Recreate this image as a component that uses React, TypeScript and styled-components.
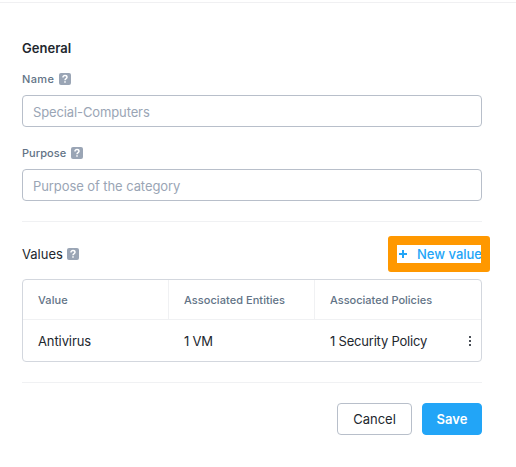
import React from "react";
import styled, { createGlobalStyle } from "styled-components";

const GlobalStyle = createGlobalStyle`
  * { box-sizing: border-box; }
  body { margin: 0; background: #fff; font-family: Inter, "Open Sans", sans-serif; }
`;

const Page = styled.main`
  height: 467px;
  padding-top: 2px;
  overflow: hidden;
`;
const Panel = styled.form`
  border-top: 1px solid #f0f0f2;
  padding: 35px 34px 0 22px;
  display: flex;
  flex-direction: column;
`;
const Text = styled.span<{ $size?: number; $weight?: number; $color?: string; $track?: number }>`
  font-size: ${(p) => p.$size ?? 13}px;
  font-weight: ${(p) => p.$weight ?? 400};
  color: ${(p) => p.$color ?? "#22272e"};
  letter-spacing: ${(p) => p.$track ?? 0}px;
  white-space: nowrap;
`;
const Heading = styled.h2`
  margin: 0;
  height: 20px;
  line-height: 20px;
  font-size: 13px;
  font-weight: 600;
  color: #22272e;
  letter-spacing: 0.05px;
`;
const Field = styled.div<{ $gap: number }>`
  margin-top: ${(p) => p.$gap}px;
  display: flex;
  flex-direction: column;
  gap: 8px;
`;
const LabelRow = styled.div<{ $gap: number }>`
  display: flex;
  align-items: center;
  gap: ${(p) => p.$gap}px;
  height: 16px;
`;
const Input = styled.input<{ $track: number }>`
  width: 460px;
  height: 32px;
  border: 1px solid #b8bfca;
  border-radius: 4px;
  padding: 2px 10px 0;
  font: 400 13px Inter, "Open Sans", sans-serif;
  letter-spacing: ${(p) => p.$track}px;
  outline: none;
  &::placeholder { color: #9aa5b5; opacity: 1; }
`;
const Divider = styled.hr<{ $gap: number }>`
  width: 460px;
  height: 1px;
  border: 0;
  margin: ${(p) => p.$gap}px 0 0;
  background: #f0f1f3;
`;
const ValuesBar = styled.div`
  margin: 14px -8px 0 0;
  width: 468px;
  height: 36px;
  display: flex;
  align-items: center;
  justify-content: space-between;
`;
const NewValue = styled.button`
  width: 102px;
  height: 36px;
  border: 9px solid #ff9800;
  border-radius: 3px;
  background: #fff;
  padding: 0 0 0 2px;
  display: flex;
  align-items: center;
  gap: 10px;
  overflow: hidden;
  font-family: inherit;
  svg { flex: none; }
`;
const Table = styled.div`
  margin-top: 7px;
  width: 460px;
  height: 83px;
  border: 1px solid #d3d7de;
  border-radius: 4px;
`;
const Row = styled.div<{ $head?: boolean }>`
  display: grid;
  grid-template-columns: 146px 146px 1fr;
  height: ${(p) => (p.$head ? 40 : 41)}px;
  border-bottom: ${(p) => (p.$head ? "1px solid #f0f1f3" : "0")};
`;
const Cell = styled.div<{ $line?: boolean }>`
  display: flex;
  align-items: center;
  justify-content: space-between;
  padding: 1px 9px 0 15px;
  border-right: 1px solid ${(p) => (p.$line ? "#f0f1f3" : "transparent")};
  &:last-child { border-right: 0; }
`;
const Actions = styled.div`
  width: 460px;
  margin-top: 20px;
  display: flex;
  justify-content: flex-end;
  gap: 10px;
`;
const Button = styled.button<{ $primary?: boolean }>`
  width: ${(p) => (p.$primary ? 60 : 75)}px;
  height: 32px;
  padding: 0;
  border-radius: 4px;
  border: 1px solid ${(p) => (p.$primary ? "#22a5f7" : "#b8bfca")};
  background: ${(p) => (p.$primary ? "#22a5f7" : "#fff")};
  font-family: inherit;
`;

const Help = () => (
  <svg width="12" height="12" viewBox="0 0 12 12">
    <rect width="12" height="12" rx="2" fill="#9aa5b5" />
    <path d="M4 4.5C4 3.2 4.8 2.6 6 2.6s2 .7 2 1.7C8 5.6 6 5.5 6 7.2" fill="none" stroke="#fff" strokeWidth="1.5" />
    <rect x="5.25" y="8.2" width="1.5" height="1.5" fill="#fff" />
  </svg>
);
const Plus = () => (
  <svg width="8" height="8" viewBox="0 0 8 8">
    <path d="M4 0v8M0 4h8" stroke="#22a5f7" strokeWidth="2" />
  </svg>
);
const Dots = () => (
  <svg width="4" height="12" viewBox="0 0 4 12" fill="#4a4f57">
    <rect x="1" y="1" width="2" height="2" />
    <rect x="1" y="5" width="2" height="2" />
    <rect x="1" y="9" width="2" height="2" />
  </svg>
);

const LABEL = "#627386";

export default function App() {
  return (
    <>
      <GlobalStyle />
      <Page>
        <Panel onSubmit={(e) => e.preventDefault()}>
          <Heading>General</Heading>
          <Field $gap={13}>
            <LabelRow $gap={5}>
              <Text $size={11} $weight={500} $color={LABEL} $track={0.35}>Name</Text>
              <Help />
            </LabelRow>
            <Input $track={-0.12} placeholder="Special-Computers" />
          </Field>
          <Field $gap={18}>
            <LabelRow $gap={5}>
              <Text $size={11} $weight={500} $color={LABEL} $track={0.05}>Purpose</Text>
              <Help />
            </LabelRow>
            <Input $track={-0.08} placeholder="Purpose of the category" />
          </Field>
          <Divider $gap={20} />
          <ValuesBar>
            <LabelRow $gap={4}>
              <Text>Values</Text>
              <Help />
            </LabelRow>
            <NewValue type="button">
              <Plus />
              <Text $weight={500} $color="#22a5f7">New value</Text>
            </NewValue>
          </ValuesBar>
          <Table>
            <Row $head>
              <Cell $line><Text $size={11} $weight={500} $color={LABEL} $track={0.1}>Value</Text></Cell>
              <Cell $line><Text $size={11} $weight={500} $color={LABEL} $track={0.05}>Associated Entities</Text></Cell>
              <Cell><Text $size={11} $weight={500} $color={LABEL}>Associated Policies</Text></Cell>
            </Row>
            <Row>
              <Cell><Text $track={-0.1}>Antivirus</Text></Cell>
              <Cell><Text $track={-0.2}>1 VM</Text></Cell>
              <Cell><Text $track={-0.2}>1 Security Policy</Text><Dots /></Cell>
            </Row>
          </Table>
          <Divider $gap={20} />
          <Actions>
            <Button type="button"><Text>Cancel</Text></Button>
            <Button $primary><Text $weight={600} $color="#fff">Save</Text></Button>
          </Actions>
        </Panel>
      </Page>
    </>
  );
}
